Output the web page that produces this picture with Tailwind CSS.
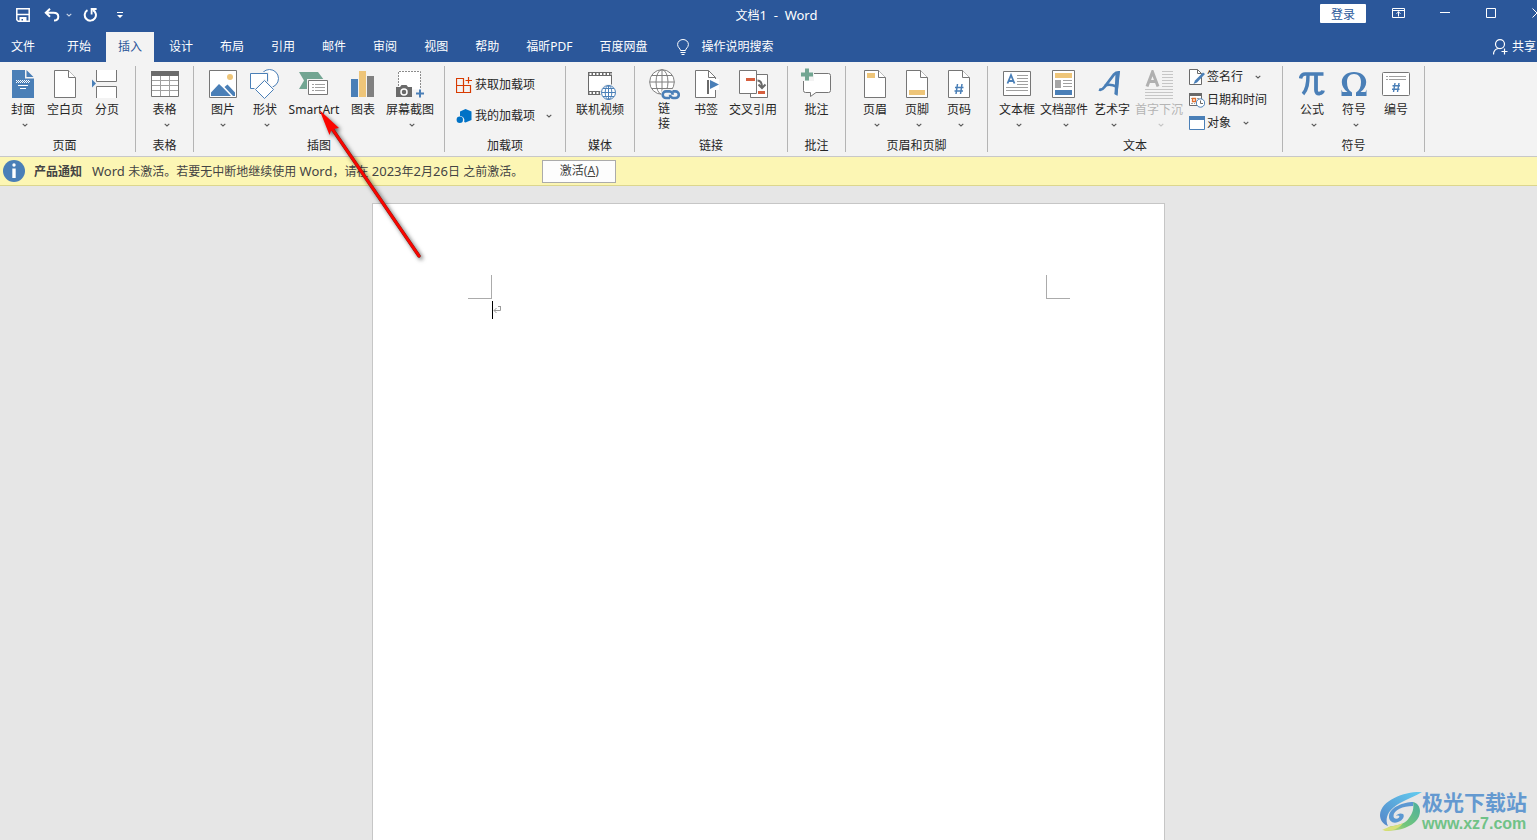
<!DOCTYPE html>
<html lang="zh-CN">
<head>
<meta charset="utf-8">
<meta name="viewport" content="width=device-width, initial-scale=1">
<title>文档1 - Word</title>
<script src="https://cdn.jsdelivr.net/npm/@tailwindcss/browser@4"></script>
</head>
<body class="relative flex h-screen flex-col overflow-hidden bg-[#e6e6e6] font-['Noto_Sans','Noto_Sans_CJK_SC',sans-serif] text-xs text-[#262626]">

<svg class="hidden" aria-hidden="true">
  <symbol id="chev" viewBox="0 0 6 4"><path d="M.7.8 3 3 5.3.8" fill="none" stroke="currentColor" stroke-opacity=".75" stroke-width="1.100"/></symbol>
  <symbol id="page" viewBox="0 0 22 28"><path d="M.5.5h14l7 7v20H.5z" fill="#fff" stroke="#767676"/><path d="M14.500.5v7h7" fill="#fff" stroke="#767676"/></symbol>
</svg>

<header class="bg-[#2b579a] text-white">
  <div class="grid h-8 grid-cols-[1fr_auto_1fr] pl-4">
    <div class="flex items-center pb-[2px]">
      <button aria-label="保存"><svg class="h-[14px] w-[14px]" viewBox="0 0 14 14"><path d="M.8.800h12.400v12.400H2.300L.8 11.700z" fill="none" stroke="#fff" stroke-width="1.500"/><path d="M1 6.500h12" stroke="#fff" stroke-width="1.500"/><path d="M3.500 13.500V9h7v4.500H7V11H5.500v2.500z" fill="#fff"/></svg></button>
      <button class="ml-[14px]" aria-label="撤消"><svg class="h-[14px] w-[16px]" viewBox="0 0 16 14"><path d="M6 .8 1.800 4.800 6 8.800M2 4.800h7.500c3 0 4.800 1.600 4.800 4 0 2.300-1.800 3.800-4.300 3.800" fill="none" stroke="#fff" stroke-width="2"/></svg></button>
      <button class="ml-[6px]" aria-label="撤消选项"><svg class="h-[4px] w-[6px]"><use href="#chev"/></svg></button>
      <button class="ml-[11px]" aria-label="重复"><svg class="h-[14px] w-[14px]" viewBox="0 0 14 14"><path d="M4.500 2.200A5.600 5.600 0 1 0 9.800 2" fill="none" stroke="#fff" stroke-width="2"/><path d="M8.600 6.500V1h5" fill="none" stroke="#fff" stroke-width="1.800"/></svg></button>
      <button class="ml-[20px]" aria-label="自定义快速访问工具栏"><svg class="h-[6px] w-[6px]" viewBox="0 0 6 6"><path d="M0 0h6v1H0zM0 3h6L3 6z" fill="#fff"/></svg></button>
    </div>
    <h1 class="self-center text-[13px] whitespace-pre"><span class="text-xs">文档</span>1&nbsp; -&nbsp; Word</h1>
    <div class="flex justify-end">
      <button class="mt-1 mr-[10px] h-[19px] w-[46px] rounded-[1px] bg-white leading-[21px] text-[#2b579a]">登录</button>
      <button class="flex h-[26px] w-[46px] items-center justify-center pr-px" aria-label="功能区显示选项"><svg class="h-[10px] w-[13px]" viewBox="0 0 13 10"><path d="M.5.5h12v9H.5zM.5 2.500h12M6.500 8.500v-5M4.500 5.800l2-2 2 2" fill="none" stroke="#fff"/></svg></button>
      <button class="flex h-[26px] w-[46px] items-center justify-center" aria-label="最小化"><svg class="h-[10px] w-[10px]" viewBox="0 0 10 10"><path d="M0 4.500h10" stroke="#fff"/></svg></button>
      <button class="flex h-[26px] w-[46px] items-center justify-center" aria-label="最大化"><svg class="h-[10px] w-[10px]" viewBox="0 0 10 10"><path d="M.5.5h9v9h-9z" fill="none" stroke="#fff"/></svg></button>
      <button class="flex h-[26px] w-[23px] items-center overflow-hidden pl-[18px]" aria-label="关闭"><svg class="h-[10px] w-[10px] shrink-0" viewBox="0 0 10 10"><path d="m.5.5 9 9M9.500.5l-9 9" stroke="#fff"/></svg></button>
    </div>
  </div>
  <nav class="flex h-[30px] gap-[3px] whitespace-nowrap">
    <button class="mr-[5px] pr-3 pl-[11px]">文件</button>
    <button class="px-3">开始</button>
    <button class="bg-[#f3f3f3] px-3 text-[#2b579a]">插入</button>
    <button class="px-3">设计</button>
    <button class="px-3">布局</button>
    <button class="px-3">引用</button>
    <button class="px-3">邮件</button>
    <button class="px-3">审阅</button>
    <button class="px-3">视图</button>
    <button class="px-3">帮助</button>
    <button class="px-3">福昕PDF</button>
    <button class="px-3">百度网盘</button>
    <button class="flex items-center gap-3 pl-[15px]"><svg class="h-4 w-3" viewBox="0 0 12 16"><path d="M3.500 11.500c0-2-2.900-3-2.900-6a5.400 5 0 0 1 10.800 0c0 3-2.900 4-2.900 6zM3.500 13.500h5M4.500 15.500h3" fill="none" stroke="#fff"/></svg>操作说明搜索</button>
    <button class="ml-auto flex items-center gap-1 pr-px"><svg class="h-4 w-[15px]" viewBox="0 0 15 16"><path d="M.5 15.500c0-3.500 2-5.500 5-6M7 .6a4.300 4.300 0 0 1 0 9 4.300 4.300 0 0 1 0-9M8.500 12.500h6M11.500 9.500v6" fill="none" stroke="#fff" stroke-width="1.200"/></svg>共享</button>
  </nav>
</header>

<section class="flex h-[95px] shrink-0 border-b border-[#c8c8c8] bg-[#f3f3f3] py-1 whitespace-nowrap" aria-label="插入">

  <div class="flex h-[86px] w-[136px] shrink-0 flex-col justify-between border-r border-[#b4b4b4]">
    <div class="flex pr-[7px] pl-[2px]">
      <button class="flex w-[42px] flex-col items-center pt-[2px]"><span class="flex h-8 items-center"><svg class="h-7 w-[22px]" viewBox="0 0 22 28"><path d="M0 0h13v8.500h9V28H0zM14.500 0v7h7z" fill="#4a7fb7"/><path d="M4 10.500h14M4 12.500h14" stroke="#fff" stroke-dasharray="1 1"/><path d="M5 11.500h13" stroke="#fff" stroke-dasharray="1 1"/><path d="M6 15.500h10M8 18.500h6" stroke="#fff"/></svg></span><span class="leading-5">封面</span><svg class="mt-[3px] ml-1 h-[4px] w-[6px]"><use href="#chev"/></svg></button>
      <button class="flex w-[42px] flex-col items-center pt-[2px]"><span class="flex h-8 items-center"><svg class="h-7 w-[22px]"><use href="#page"/></svg></span><span class="leading-5">空白页</span></button>
      <button class="flex w-[42px] flex-col items-center pt-[2px]"><span class="flex h-8 items-center pr-1"><svg class="h-7 w-[26px]" viewBox="0 0 26 28"><path d="M4.500 0v11.500h20V0M4.500 28V16.500h20V28" fill="#fff" stroke="#767676"/><path d="M0 9.500v8l4-4z" fill="#4a7fb7"/></svg></span><span class="leading-5">分页</span></button>
    </div>
    <p class="pr-[6px] text-center leading-3">页面</p>
  </div>

  <div class="flex h-[86px] w-[58px] shrink-0 flex-col justify-between border-r border-[#b4b4b4]">
    <div class="flex justify-center">
      <button class="flex w-[42px] flex-col items-center pt-[2px]"><span class="flex h-8 items-center"><svg class="h-[26px] w-7" viewBox="0 0 28 26"><path d="M.5 1h27v24.500H.5z" fill="#fff" stroke="#767676"/><path d="M0 0h28v5H0z" fill="#6a6a6a"/><path d="M1 9.500h26M1 14.500h26M1 19.500h26M9.500 5v20M18.500 5v20" stroke="#a0a0a0"/></svg></span><span class="leading-5">表格</span><svg class="mt-[3px] ml-1 h-[4px] w-[6px]"><use href="#chev"/></svg></button>
    </div>
    <p class="text-center leading-3">表格</p>
  </div>

  <div class="flex h-[86px] w-[251px] shrink-0 flex-col justify-between border-r border-[#b4b4b4]">
    <div class="flex px-2">
      <button class="flex w-[42px] flex-col items-center pt-[2px]"><span class="flex h-8 items-center"><svg class="h-7 w-7" viewBox="0 0 28 28"><path d="M.5.5h27v27H.5z" fill="#fff" stroke="#767676"/><circle cx="21" cy="7" r="3" fill="#eec579"/><path d="M2 26v-3.500l8-8.500 4 3.800 8 8.200zM15.500 17l3-2.500 7.500 8V26h-2z" fill="#4a7fb7"/></svg></span><span class="leading-5">图片</span><svg class="mt-[3px] h-[4px] w-[6px]"><use href="#chev"/></svg></button>
      <button class="flex w-[42px] flex-col items-center pt-[2px]"><span class="flex h-8 items-center"><svg class="h-[30px] w-[30px]" viewBox="0 0 30 30"><circle cx="19.500" cy="9.500" r="9" fill="#fff" stroke="#4a7fb7"/><path d="M.5 4.500h17v15H.5z" fill="#fff" stroke="#f3f3f3" stroke-width="3"/><path d="M.5 4.500h17v15H.5z" fill="#fff" stroke="#4a7fb7"/><path d="m14.500 11.500 9 9-9 9-9-9z" fill="#fff" stroke="#f3f3f3" stroke-width="3"/><path d="m14.500 11.500 9 9-9 9-9-9z" fill="#fff" stroke="#4a7fb7"/></svg></span><span class="leading-5">形状</span><svg class="mt-[3px] ml-1 h-[4px] w-[6px]"><use href="#chev"/></svg></button>
      <button class="flex w-[56px] flex-col items-center pt-[2px]"><span class="flex h-8 items-center"><svg class="h-6 w-[30px]" viewBox="0 0 30 24"><path d="M0 0h19l6 8-5 9H0l5-8.500z" fill="#72a592"/><path d="M9.500 8.500h19v14h-19z" fill="#fff" stroke="#f3f3f3" stroke-width="3"/><path d="M9.500 8.500h19v14h-19z" fill="#fff" stroke="#767676"/><path d="M13 12.500h2M13 15.500h2M13 18.500h2M16 12.500h10M16 15.500h10M16 18.500h10" stroke="#a0a0a0"/></svg></span><span class="leading-5">SmartArt</span></button>
      <button class="flex w-[42px] flex-col items-center pt-[2px]"><span class="flex h-8 items-center"><svg class="h-[26px] w-6" viewBox="0 0 24 26"><path d="M0 8h7v18H0z" fill="#4a7fb7"/><path d="M8 0h7v26H8z" fill="#eec579"/><path d="M16 5h7v21h-7z" fill="#808080"/></svg></span><span class="leading-5">图表</span></button>
      <button class="flex w-[52px] flex-col items-center pt-[2px]"><span class="flex h-8 items-center"><svg class="h-7 w-7" viewBox="0 0 28 28"><path d="M2.500.5h22v19h-22z" fill="#fff"/><path d="M2.500 16V1.500h22V19" fill="none" stroke="#8c8c8c" stroke-dasharray="2 1"/><path d="M0 17h4l1.500-2h5l1.500 2h4v10H0z" fill="#6a6a6a"/><circle cx="8" cy="22" r="3" fill="none" stroke="#fff" stroke-width="1.500"/><path d="M20 23.500h8M24 19.500v8" stroke="#4a7fb7" stroke-width="2"/></svg></span><span class="leading-5">屏幕截图</span><svg class="mt-[3px] ml-1 h-[4px] w-[6px]"><use href="#chev"/></svg></button>
    </div>
    <p class="text-center leading-3">插图</p>
  </div>

  <div class="flex h-[86px] w-[121px] shrink-0 flex-col justify-between border-r border-[#b4b4b4]">
    <div class="flex flex-col items-start gap-[13px] pt-[10px] pl-[11px]">
      <button class="flex items-center gap-[3px] leading-[18px]"><svg class="h-4 w-4" viewBox="0 0 16 16"><path d="M8 1.500H.5v14h14V8.500H.5M7.500 1.500v14" fill="none" stroke="#d83b01" stroke-width="1.200"/><path d="M9.500 3.500h6.500M12.500 0v6.500" stroke="#d83b01" stroke-width="1.200"/></svg>获取加载项</button>
      <button class="flex items-center gap-[3px] leading-[18px]"><svg class="h-4 w-4" viewBox="0 0 16 16"><path d="m9.500 1 6 2.500v8.500l-6 2.500-1.300-.6a4.600 4.600 0 0 0-4.200-6V3.500z" fill="#0072c6"/><circle cx="3.800" cy="11.800" r="3.200" fill="#0072c6"/></svg>我的加载项<svg class="ml-2 h-[4px] w-[6px]"><use href="#chev"/></svg></button>
    </div>
    <p class="text-center leading-3">加载项</p>
  </div>

  <div class="flex h-[86px] w-[69px] shrink-0 flex-col justify-between border-r border-[#b4b4b4]">
    <div class="flex justify-center">
      <button class="flex w-[52px] flex-col items-center pt-[2px]"><span class="flex h-8 items-center pt-1 pl-1"><svg class="h-7 w-7" viewBox="0 0 28 28"><path d="M0 0h24v23H0z" fill="#6a6a6a"/><path d="M1 4h22v15H1z" fill="#fff"/><path d="M1.500 2h22M1.500 21h22" stroke="#fff" stroke-width="2" stroke-dasharray="2 1.500"/><circle cx="20.500" cy="20.500" r="8.500" fill="#f3f3f3"/><circle cx="20.500" cy="20.500" r="7" fill="#fff" stroke="#4a7fb7"/><ellipse cx="20.500" cy="20.500" rx="3.300" ry="7" fill="none" stroke="#4a7fb7"/><path d="M13.500 20.500h14M20.500 13.500v14M15 16.500h11M15 24.500h11" stroke="#4a7fb7"/></svg></span><span class="leading-5">联机视频</span></button>
    </div>
    <p class="text-center leading-3">媒体</p>
  </div>

  <div class="flex h-[86px] w-[153px] shrink-0 flex-col justify-between border-r border-[#b4b4b4]">
    <div class="flex px-2">
      <button class="flex w-[42px] flex-col items-center pt-[2px]"><span class="flex h-8 items-center"><svg class="h-[31px] w-[31px]" viewBox="0 0 31 31"><circle cx="13" cy="13" r="12.300" fill="#fff" stroke="#808080"/><ellipse cx="13" cy="13" rx="6" ry="12.300" fill="none" stroke="#808080"/><path d="M.7 13h24.600M13 .7v24.600M2.500 6.500h21M2.500 19.500h21" stroke="#808080"/><path d="M12 24a5 5 0 0 1 5-4h14v11H13z" fill="#f3f3f3"/><path d="M21 29h-4a3.300 3.300 0 0 1 0-6.600h3.500a3.300 3.300 0 0 1 3.200 3.300M21 25.700a3.200 3.200 0 0 0 3 3.300h2.500a3.300 3.300 0 0 0 0-6.600h-3" fill="none" stroke="#4a7fb7" stroke-width="2.600"/></svg></span><span class="w-3 pt-px leading-[15px] whitespace-normal">链接</span></button>
      <button class="flex w-[42px] flex-col items-center pt-[2px]"><span class="flex h-8 items-center pl-[2px]"><svg class="h-7 w-6" viewBox="0 0 24 28"><path d="M.5.5h13l7 7v20H.5z" fill="#fff" stroke="#767676"/><path d="M13.500.5v7h7" fill="none" stroke="#767676"/><path d="M12 9h12v11H12z" fill="#fff"/><path d="M13 10v14" stroke="#6a6a6a" stroke-width="2"/><path d="m15 10 9 4.500-9 4.500z" fill="#4a7fb7"/></svg></span><span class="leading-5">书签</span></button>
      <button class="flex w-[52px] flex-col items-center pt-[2px]"><span class="flex h-8 items-center"><svg class="h-7 w-[29px]" viewBox="0 0 29 28"><path d="M11.500 4.500h17v23h-17z" fill="#fff" stroke="#767676"/><path d="M.5.5h17v23H.5z" fill="#fff" stroke="#767676"/><path d="M7 8h9v3H7zM19 21h7v3h-7z" fill="#d65f3e"/><path d="M18.500 10.500c3 0 4.500 2 4.500 7M19.500 14.500l3.500 3.500 3.500-3.500" fill="none" stroke="#6a6a6a" stroke-width="2"/></svg></span><span class="leading-5">交叉引用</span></button>
    </div>
    <p class="text-center leading-3">链接</p>
  </div>

  <div class="flex h-[86px] w-[58px] shrink-0 flex-col justify-between border-r border-[#b4b4b4]">
    <div class="flex justify-center">
      <button class="flex w-[42px] flex-col items-center pt-[2px]"><span class="flex h-8 items-start pr-[2px]"><svg class="h-[30px] w-[30px]" viewBox="0 0 30 30"><path d="M4.500 5.500h23q2 0 2 2v15q0 2-2 2H15l-5.500 4v-4h-5q-2 0-2-2v-15q0-2 2-2z" fill="#fff" stroke="#767676"/><path d="M0 0h13v13H0z" fill="#f3f3f3"/><path d="M0 6.500h12M6 .5v12" stroke="#72a592" stroke-width="4"/></svg></span><span class="leading-5">批注</span></button>
    </div>
    <p class="text-center leading-3">批注</p>
  </div>

  <div class="flex h-[86px] w-[142px] shrink-0 flex-col justify-between border-r border-[#b4b4b4]">
    <div class="flex pl-2">
      <button class="flex w-[42px] flex-col items-center pt-[2px]"><span class="flex h-8 items-center"><svg class="h-7 w-[22px]" viewBox="0 0 22 28"><use href="#page" width="22" height="28"/><path d="M3 3h8v5H3z" fill="#eec579"/></svg></span><span class="leading-5">页眉</span><svg class="mt-[3px] ml-1 h-[4px] w-[6px]"><use href="#chev"/></svg></button>
      <button class="flex w-[42px] flex-col items-center pt-[2px]"><span class="flex h-8 items-center"><svg class="h-7 w-[22px]" viewBox="0 0 22 28"><use href="#page" width="22" height="28"/><path d="M3 20h16v5H3z" fill="#eec579"/></svg></span><span class="leading-5">页脚</span><svg class="mt-[3px] ml-1 h-[4px] w-[6px]"><use href="#chev"/></svg></button>
      <button class="flex w-[42px] flex-col items-center pt-[2px]"><span class="flex h-8 items-center"><svg class="h-7 w-[22px]" viewBox="0 0 22 28"><use href="#page" width="22" height="28"/><path d="M9.500 14 8 24M14 14l-1.500 10M7 17.500h8.500M6.500 21H15" stroke="#4a7fb7" stroke-width="1.500"/></svg></span><span class="leading-5">页码</span><svg class="mt-[3px] ml-1 h-[4px] w-[6px]"><use href="#chev"/></svg></button>
    </div>
    <p class="text-center leading-3">页眉和页脚</p>
  </div>

  <div class="flex h-[86px] w-[295px] shrink-0 flex-col justify-between border-r border-[#b4b4b4]">
    <div class="flex pl-2">
      <button class="flex w-[42px] flex-col items-center pt-[2px]"><span class="flex h-8 items-center"><svg class="h-[26px] w-7" viewBox="0 0 28 26"><path d="M.5.5h27v24H.5z" fill="#fff" stroke="#767676"/><path d="M4.500 12.500 8 4l3.500 8.500M5.500 10h5" fill="none" stroke="#4a7fb7" stroke-width="1.800"/><path d="M14 4.500h11M14 7.500h11M14 10.500h11M14 13.500h11M3 16.500h22M3 19.500h22" stroke="#a0a0a0"/></svg></span><span class="leading-5">文本框</span><svg class="mt-[3px] ml-1 h-[4px] w-[6px]"><use href="#chev"/></svg></button>
      <button class="flex w-[52px] flex-col items-center pt-[2px]"><span class="flex h-8 items-center"><svg class="h-7 w-6" viewBox="0 0 24 28"><path d="M.5.5h22v27H.5z" fill="#fff" stroke="#767676"/><path d="M3 3h17v5H3z" fill="#eec579"/><path d="M3 10h6v8H3z" fill="#a6a6a6"/><path d="M11 10.500h9M11 13.500h9M11 16.500h9" stroke="#a0a0a0"/><path d="M3 20h17v5H3z" fill="#4a7fb7"/></svg></span><span class="leading-5">文档部件</span><svg class="mt-[3px] ml-1 h-[4px] w-[6px]"><use href="#chev"/></svg></button>
      <button class="flex w-[44px] flex-col items-center pt-[2px]"><span class="flex h-8 items-center pr-1"><svg class="h-[26px] w-6" viewBox="0 0 24 26"><path d="M1 18.500c2.500 1 4-.5 5.500-2.500L16 3.500c1.500-1.500 3-2 4.500-2L18 23.500" fill="none" stroke="#4a7fb7" stroke-width="2.800"/><path d="m17.500 2 4-1.500L19.500 25l-3-2z" fill="#4a7fb7"/><path d="M7 14.500q5-2 11.500 1" fill="none" stroke="#4a7fb7" stroke-width="2.600"/></svg></span><span class="leading-5">艺术字</span><svg class="mt-[3px] ml-1 h-[4px] w-[6px]"><use href="#chev"/></svg></button>
      <button class="flex w-[50px] flex-col items-center pt-[2px] text-[#b4b4b4]" disabled><span class="flex h-8 items-center"><svg class="h-[29px] w-7" viewBox="0 0 28 29"><path d="M2 16.500 7.500 2l5.500 14.500M4 11.500h7" fill="none" stroke="#b0b0b0" stroke-width="3"/><path d="M17 1.500h11M17 4.500h11M17 7.500h11M17 10.500h11M17 13.500h11M17 16.500h11M0 19.500h28M0 22.500h28M0 25.500h28M0 28.500h28" stroke="#c6c6c6"/></svg></span><span class="leading-5">首字下沉</span><svg class="mt-[3px] ml-1 h-[4px] w-[6px]"><use href="#chev"/></svg></button>
      <div class="flex flex-col items-start gap-[5px] pt-[2px] pl-[5px]">
        <button class="flex items-center gap-[2px] leading-[18px]"><svg class="h-4 w-4" viewBox="0 0 16 16"><path d="M.5.5h8l4 4v11H.5z" fill="#fff" stroke="#6a6a6a"/><path d="M8.500.5v4h4" fill="none" stroke="#6a6a6a"/><path d="m14 3.500 2 1.500-8 8.500-3.500 1.500L6 11.500z" fill="#4a7fb7"/></svg>签名行<svg class="ml-[10px] h-[4px] w-[6px]"><use href="#chev"/></svg></button>
        <button class="flex items-center gap-[2px] leading-[18px]"><svg class="h-4 w-4" viewBox="0 0 16 16"><path d="M.5 2.500h12v11H.5z" fill="#fff" stroke="#6a6a6a"/><path d="M0 1h13v3H0z" fill="#6a6a6a"/><path d="M2 6.500h9M2 11.500h4" stroke="#a0a0a0" stroke-dasharray="2 1"/><path d="M3.500 6.500h3v3h-3z" fill="#fff" stroke="#e07030" stroke-width="1.300"/><circle cx="11.500" cy="11" r="4.200" fill="#fff" stroke="#4a7fb7"/><path d="M11.500 8.500V11.500H14" fill="none" stroke="#6a6a6a"/></svg>日期和时间</button>
        <button class="flex items-center gap-[2px] leading-[18px]"><svg class="h-[14px] w-4" viewBox="0 0 16 14"><path d="M.5.5h15v13H.5z" fill="#fff" stroke="#4a7fb7"/><path d="M0 0h16v4H0z" fill="#4a7fb7"/></svg>对象<svg class="ml-[10px] h-[4px] w-[6px]"><use href="#chev"/></svg></button>
      </div>
    </div>
    <p class="text-center leading-3">文本</p>
  </div>

  <div class="flex h-[86px] w-[142px] shrink-0 flex-col justify-between border-r border-[#b4b4b4]">
    <div class="flex pl-2">
      <button class="flex w-[42px] flex-col items-center pt-[2px]"><span class="flex h-8 items-center"><svg class="h-6 w-[26px]" viewBox="0 0 26 24"><path d="M1.500 6.500Q2.500 1.500 7 2h17.500" fill="none" stroke="#4a7fb7" stroke-width="3.600"/><path d="M9 3C9 11 8.500 17 4 22" fill="none" stroke="#4a7fb7" stroke-width="3.400"/><path d="M17 3v15q0 4 3.500 3.500 3-.5 3.500-3" fill="none" stroke="#4a7fb7" stroke-width="3.800"/></svg></span><span class="leading-5">公式</span><svg class="mt-[3px] ml-1 h-[4px] w-[6px]"><use href="#chev"/></svg></button>
      <button class="flex w-[42px] flex-col items-center pt-[2px]"><span class="flex h-8 items-center"><svg class="h-6 w-[26px]" viewBox="0 0 26 24"><path d="M.5 17.500 1.500 20h5C3 17.500.8 14 .8 10 .8 4 6 0 13 0s12.200 4 12.200 10c0 4-2.200 7.500-5.700 10h5l1-2.500V24H15v-3.500c3.500-2 5-5.500 5-10.500 0-5-2.500-8-7-8s-7 3-7 8c0 5 1.500 8.500 5 10.500V24H.5z" fill="#4a7fb7"/></svg></span><span class="leading-5">符号</span><svg class="mt-[3px] ml-1 h-[4px] w-[6px]"><use href="#chev"/></svg></button>
      <button class="flex w-[42px] flex-col items-center pt-[2px]"><span class="flex h-8 items-center"><svg class="h-[24px] w-7" viewBox="0 0 28 24"><rect x=".5" y=".5" width="27" height="23" rx="1" fill="#fff" stroke="#767676"/><path d="M4 4.500h2M7 4.500h17M4 7.500h2M7 7.500h17" stroke="#a0a0a0"/><path d="M13 11l-1.500 9M17 11l-1.500 9M10.500 13.800H18M10 17.200h7.500" stroke="#4a7fb7" stroke-width="1.400"/></svg></span><span class="leading-5">编号</span></button>
    </div>
    <p class="text-center leading-3">符号</p>
  </div>
</section>

<section class="flex h-[29px] shrink-0 items-center border-b border-[#dcd68e] bg-[#fcf6b4] pl-[3px] whitespace-nowrap text-[#444]" aria-label="产品通知">
  <svg class="h-[22px] w-[22px]" viewBox="0 0 22 22"><circle cx="11" cy="11" r="11" fill="#4a7fb7"/><circle cx="11" cy="5" r="1.700" fill="#fff"/><path d="M9.300 8.500h3.400V18H9.300z" fill="#fff"/></svg>
  <strong class="ml-[9px] pt-[2px]">产品通知</strong>
  <p class="ml-[10px] pt-[2px] text-[13px]">Word <span class="text-xs">未激活。若要无中断地继续使用</span> Word<span class="text-xs">，请在</span> 2023<span class="text-xs">年</span>2<span class="text-xs">月</span>26<span class="text-xs">日</span> <span class="text-xs">之前激活。</span></p>
  <button class="ml-[19px] h-[23px] w-[74px] border border-[#ababab] bg-[#fdfdfd]">激活(<u>A</u>)</button>
</section>

<main class="flex-1 overflow-hidden pt-[17px]">
  <article class="mx-auto h-full w-[793px] border border-b-0 border-[#c6c6c6] bg-white pt-[71px]">
    <div class="flex justify-between pr-[94px] pl-[95px]">
      <span class="h-6 w-6 border-r border-b border-[#ababab]"></span>
      <span class="h-6 w-6 border-b border-l border-[#ababab]"></span>
    </div>
    <div class="mt-[2px] flex items-center pl-[119px]">
      <span class="h-[18px] w-px bg-black"></span>
      <svg class="h-[9px] w-[8px]" viewBox="0 0 8 9"><path d="M7.500 0v4.500H1M3.500 2 1 4.500 3.500 7M5 .5h2.500" fill="none" stroke="#9a9a9a"/></svg>
    </div>
  </article>
</main>

<svg class="pointer-events-none absolute top-[100px] left-[310px] h-[170px] w-[130px]" viewBox="310 100 130 170" aria-hidden="true">
  <g class="drop-shadow-[2px_2px_2px_rgba(0,0,0,0.6)]"><path d="M333 130 419 256" stroke="#8a1a10" stroke-width="3.400" stroke-linecap="round"/><path d="M333 130 419 256" stroke="#f90500" stroke-width="2.600" stroke-linecap="round"/><path d="m319.500 110 19.500 18-5 1-3 2-1.500 4z" fill="#fb0500"/></g>
</svg>

<div class="absolute right-[10px] bottom-[6px] flex items-center whitespace-nowrap">
  <svg class="h-[42px] w-[43px]" viewBox="0 0 43 42" aria-hidden="true">
    <defs>
      <linearGradient id="wa" x1="1" y1="0" x2="0" y2="1"><stop offset="0" stop-color="#62cdf0"/><stop offset="1" stop-color="#5585c8"/></linearGradient>
      <linearGradient id="wb" x1="1" y1="0" x2="0" y2="1"><stop offset="0" stop-color="#4bae9e"/><stop offset=".6" stop-color="#72c67c"/><stop offset="1" stop-color="#dfe070"/></linearGradient>
    </defs>
    <path d="M43 1C28 0 2 8 1 24c0 5 3 9 8 11-3-6-1-13 5-18C22 10 31 8 43 1z" fill="url(#wa)"/>
    <path d="M34 11c-9 0-23 5-24 14-.5 5 4 8 9 6 5-1.500 7-6 5-8-2.500-1.500-6 0-7 2 3-1 4 0 3 1.500-2 2-5.500 1.500-5.500-1.500C14.500 19 24 15 34 15z" fill="#5b98d2"/>
    <path d="M34 11c9 2 9 14 2 20-8 7-19 9-31 9 3-3 5-5 9-5 7-1 13-3 16-8 4-5 5-10 4-16z" fill="url(#wb)"/>
    <path d="M3 39c7-4 15-4 21-7-4 6-12 9-21 7z" fill="#d8e07a"/>
  </svg>
  <div>
    <p class="text-[21px] leading-[24px] font-bold text-[#6499d0]">极光下载站</p>
    <p class="font-['Liberation_Sans',sans-serif] text-[16px] leading-[20px] font-bold text-[#70c287]">www.xz7.com</p>
  </div>
</div>
</body>
</html>
